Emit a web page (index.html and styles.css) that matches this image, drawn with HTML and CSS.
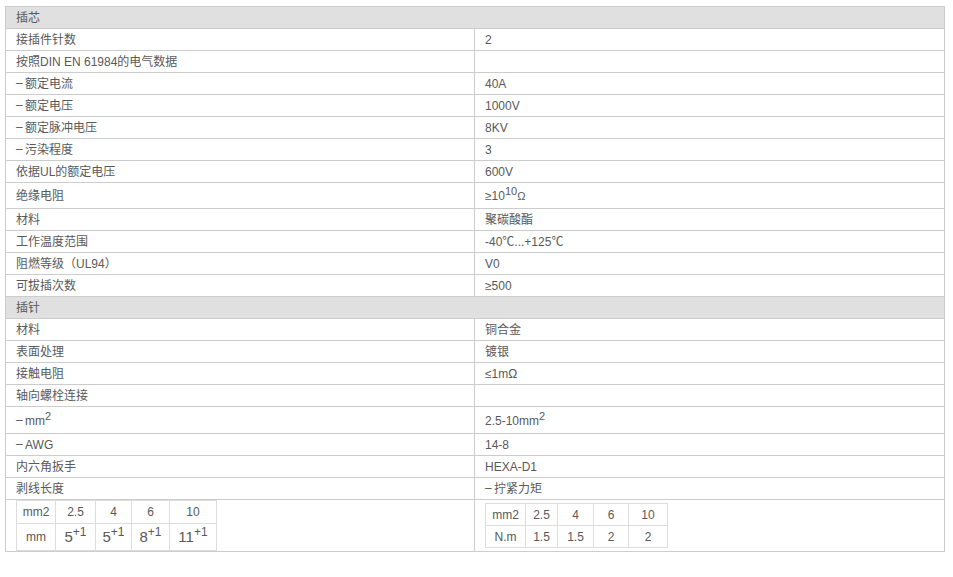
FILE: index.html
```html
<!DOCTYPE html>
<html lang="zh">
<head>
<meta charset="utf-8">
<title>规格参数</title>
<link rel="stylesheet" href="styles.css">
</head>
<body>
<table class="spec">
  <colgroup><col class="c1"><col class="c2"></colgroup>
  <tbody>
    <tr class="head"><td colspan="2">插芯</td></tr>
    <tr><td>接插件针数</td><td>2</td></tr>
    <tr><td>按照DIN EN 61984的电气数据</td><td></td></tr>
    <tr><td><span class="dash">–</span>额定电流</td><td>40A</td></tr>
    <tr><td><span class="dash">–</span>额定电压</td><td>1000V</td></tr>
    <tr><td><span class="dash">–</span>额定脉冲电压</td><td>8KV</td></tr>
    <tr><td><span class="dash">–</span>污染程度</td><td>3</td></tr>
    <tr><td>依据UL的额定电压</td><td>600V</td></tr>
    <tr class="tall"><td>绝缘电阻</td><td>≥10<sup>10</sup><span class="ohm">Ω</span></td></tr>
    <tr><td>材料</td><td>聚碳酸酯</td></tr>
    <tr><td>工作温度范围</td><td>-40℃...+125℃</td></tr>
    <tr><td>阻燃等级（UL94）</td><td>V0</td></tr>
    <tr><td>可拔插次数</td><td>≥500</td></tr>
    <tr class="head"><td colspan="2">插针</td></tr>
    <tr><td>材料</td><td>铜合金</td></tr>
    <tr><td>表面处理</td><td>镀银</td></tr>
    <tr><td>接触电阻</td><td>≤1mΩ</td></tr>
    <tr><td>轴向螺栓连接</td><td></td></tr>
    <tr class="taller"><td><span class="dash">–</span>mm<sup>2</sup></td><td>2.5-10mm<sup>2</sup></td></tr>
    <tr><td><span class="dash">–</span>AWG</td><td>14-8</td></tr>
    <tr><td>内六角扳手</td><td>HEXA-D1</td></tr>
    <tr><td>剥线长度</td><td><span class="dash">–</span>拧紧力矩</td></tr>
    <tr class="last">
      <td>
        <table class="sub sub-l">
          <colgroup><col class="l1"><col class="l2"><col class="l3"><col class="l4"><col class="l5"></colgroup>
          <tbody>
            <tr class="r1"><td>mm2</td><td>2.5</td><td>4</td><td>6</td><td>10</td></tr>
            <tr class="r2"><td>mm</td><td><span class="big">5<sup>+1</sup></span></td><td><span class="big">5<sup>+1</sup></span></td><td><span class="big">8<sup>+1</sup></span></td><td><span class="big">11<sup>+1</sup></span></td></tr>
          </tbody>
        </table>
      </td>
      <td>
        <table class="sub sub-r">
          <colgroup><col class="k1"><col class="k2"><col class="k3"><col class="k4"><col class="k5"></colgroup>
          <tbody>
            <tr><td>mm2</td><td>2.5</td><td>4</td><td>6</td><td>10</td></tr>
            <tr><td>N.m</td><td>1.5</td><td>1.5</td><td>2</td><td>2</td></tr>
          </tbody>
        </table>
      </td>
    </tr>
  </tbody>
</table>
</body>
</html>
```

FILE: styles.css
```css
html, body {
  margin: 0;
  background: #fff;
}
body {
  padding: 6px 0 0 5px;
  font-family: "Liberation Sans", "Noto Sans CJK SC", sans-serif;
  font-size: 12px;
  color: #595959;
}
.spec {
  border-collapse: collapse;
  table-layout: fixed;
  width: 940px;
}
.spec col.c1 { width: 469px; }
.spec > tbody > tr > td {
  border: 1px solid #ccc;
  height: 19px;
  padding: 2px 10px 0;
  line-height: 19px;
  vertical-align: middle;
  white-space: nowrap;
}
.spec > tbody > tr.head > td {
  background: #e0e0e0;
}
.spec > tbody > tr.tall > td { height: 23px; }
.spec > tbody > tr.taller > td { height: 24px; }
.spec > tbody > tr.last > td {
  padding-top: 0;
  padding-bottom: 0;
}
.dash {
  display: inline-block;
  width: 9px;
  line-height: 12px;
  vertical-align: 1px;
}
sup {
  font-size: 11px;
  line-height: 0;
  vertical-align: 5px;
}
.ohm { font-size: 11px; }

.sub {
  border-collapse: collapse;
  table-layout: fixed;
}
.sub td {
  border: 1px solid #ddd;
  text-align: center;
  padding: 0;
  line-height: 20px;
  vertical-align: middle;
}
.sub-l { width: 200px; }
.sub-l .r1 td { height: 22px; }
.sub-l .r2 td { height: 26px; }
.sub-r { width: 182px; }
.sub-r td { height: 21px; }
.l1 { width: 39px; } .l2 { width: 40px; } .l3 { width: 36px; } .l4 { width: 38px; } .l5 { width: 47px; }
.k1 { width: 40px; } .k2 { width: 32px; } .k3 { width: 36px; } .k4 { width: 35px; } .k5 { width: 39px; }
.big { font-size: 15px; }
.big sup { font-size: 12px; vertical-align: 6px; }
```
